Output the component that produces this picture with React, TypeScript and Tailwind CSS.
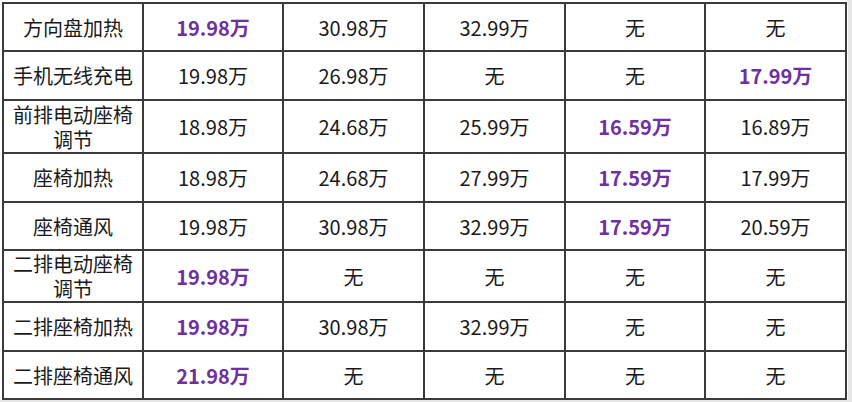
type Cell = { text: string; hot?: boolean }

const rows: { label: string[]; h: string; cells: Cell[] }[] = [
  {
    label: ["方向盘加热"],
    h: "h-[48px]",
    cells: [{ text: "19.98万", hot: true }, { text: "30.98万" }, { text: "32.99万" }, { text: "无" }, { text: "无" }],
  },
  {
    label: ["手机无线充电"],
    h: "h-[49px]",
    cells: [{ text: "19.98万" }, { text: "26.98万" }, { text: "无" }, { text: "无" }, { text: "17.99万", hot: true }],
  },
  {
    label: ["前排电动座椅", "调节"],
    h: "h-[53px]",
    cells: [{ text: "18.98万" }, { text: "24.68万" }, { text: "25.99万" }, { text: "16.59万", hot: true }, { text: "16.89万" }],
  },
  {
    label: ["座椅加热"],
    h: "h-[49px]",
    cells: [{ text: "18.98万" }, { text: "24.68万" }, { text: "27.99万" }, { text: "17.59万", hot: true }, { text: "17.99万" }],
  },
  {
    label: ["座椅通风"],
    h: "h-[48px]",
    cells: [{ text: "19.98万" }, { text: "30.98万" }, { text: "32.99万" }, { text: "17.59万", hot: true }, { text: "20.59万" }],
  },
  {
    label: ["二排电动座椅", "调节"],
    h: "h-[52px]",
    cells: [{ text: "19.98万", hot: true }, { text: "无" }, { text: "无" }, { text: "无" }, { text: "无" }],
  },
  {
    label: ["二排座椅加热"],
    h: "h-[49px]",
    cells: [{ text: "19.98万", hot: true }, { text: "30.98万" }, { text: "32.99万" }, { text: "无" }, { text: "无" }],
  },
  {
    label: ["二排座椅通风"],
    h: "h-[48px]",
    cells: [{ text: "21.98万", hot: true }, { text: "无" }, { text: "无" }, { text: "无" }, { text: "无" }],
  },
]

export default function App() {
  return (
    <div className="w-[852px] h-[402px] bg-[#e6e6e6] overflow-hidden">
      <div
        className="w-[848px] h-[400px] bg-white pt-[2px] pl-[2px]"
        style={{ fontFamily: '"Noto Sans CJK SC", "Noto Sans", sans-serif' }}
      >
        <table className="border-collapse table-fixed text-[20px] leading-[25px] text-[#1a1a1a]">
          <colgroup>
            <col className="w-[140px]" />
            <col className="w-[140px]" />
            <col className="w-[141px]" />
            <col className="w-[141px]" />
            <col className="w-[140px]" />
            <col className="w-[141px]" />
          </colgroup>
          <tbody>
            {rows.map((r) => (
              <tr key={r.label.join("")} className={r.h}>
                <td className="border-2 border-[#3a3a3a] text-center p-0">
                  {r.label.map((l) => (
                    <div key={l}>{l}</div>
                  ))}
                </td>
                {r.cells.map((c, i) => (
                  <td
                    key={i}
                    className={
                      c.hot
                        ? "border-2 border-[#3a3a3a] text-center p-0 font-bold text-[#7030a0]"
                        : "border-2 border-[#3a3a3a] text-center p-0"
                    }
                  >
                    {c.text}
                  </td>
                ))}
              </tr>
            ))}
          </tbody>
        </table>
      </div>
    </div>
  )
}
